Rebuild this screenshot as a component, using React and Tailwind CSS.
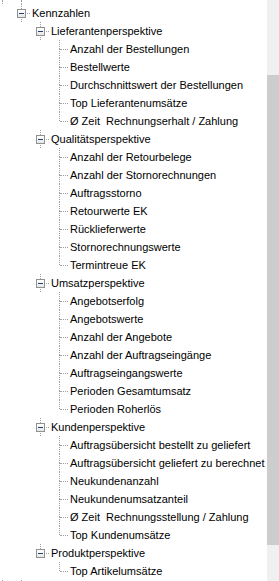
import React from "react";

const TREE = [
    {
        label: "Kennzahlen",
        children: [
            {
                label: "Lieferantenperspektive",
                children: [
                    "Anzahl der Bestellungen",
                    "Bestellwerte",
                    "Durchschnittswert der Bestellungen",
                    "Top Lieferantenumsätze",
                    "Ø Zeit  Rechnungserhalt / Zahlung",
                ],
            },
            {
                label: "Qualitätsperspektive",
                children: [
                    "Anzahl der Retourbelege",
                    "Anzahl der Stornorechnungen",
                    "Auftragsstorno",
                    "Retourwerte EK",
                    "Rücklieferwerte",
                    "Stornorechnungswerte",
                    "Termintreue EK",
                ],
            },
            {
                label: "Umsatzperspektive",
                children: [
                    "Angebotserfolg",
                    "Angebotswerte",
                    "Anzahl der Angebote",
                    "Anzahl der Auftragseingänge",
                    "Auftragseingangswerte",
                    "Perioden Gesamtumsatz",
                    "Perioden Roherlös",
                ],
            },
            {
                label: "Kundenperspektive",
                children: [
                    "Auftragsübersicht bestellt zu geliefert",
                    "Auftragsübersicht geliefert zu berechnet",
                    "Neukundenanzahl",
                    "Neukundenumsatzanteil",
                    "Ø Zeit  Rechnungsstellung / Zahlung",
                    "Top Kundenumsätze",
                ],
            },
            {
                label: "Produktperspektive",
                children: ["Top Artikelumsätze"],
            },
        ],
    },
];

// flatten the tree into rows; guides = which ancestor columns still carry a line
function flatten(nodes, guides, out) {
    nodes.forEach((n, i) => {
        const node = typeof n === "string" ? { label: n } : n;
        const last = i === nodes.length - 1;
        out.push({ label: node.label, guides, last, expandable: !!node.children });
        if (node.children) flatten(node.children, [...guides, !last], out);
    });
    return out;
}

// the root level has more siblings above and below the visible part
const ROWS = flatten(TREE, [true], []).map((r, i) => (i === 0 ? { ...r, last: false } : r));

function Guide({ on }) {
    return (
        <div className="relative w-[19px] shrink-0">
            {on && <span className="absolute left-[2px] top-0 bottom-0 border-l border-dotted border-[#a0a0a0]" />}
        </div>
    );
}

function Row({ row }) {
    return (
        <div className="flex h-[18px] items-center">
            {row.guides.map((g, i) => (
                <Guide key={i} on={g} />
            ))}
            <div className="relative h-full w-[12px] shrink-0">
                <span className="absolute left-[2px] top-0 h-[9px] border-l border-dotted border-[#a0a0a0]" />
                {!row.last && (
                    <span className="absolute left-[2px] top-[9px] bottom-0 border-l border-dotted border-[#a0a0a0]" />
                )}
                <span className="absolute left-[3px] top-[9px] w-[8px] border-t border-dotted border-[#a0a0a0]" />
                {row.expandable && (
                    <span className="absolute left-[-2px] top-[5px] flex h-[9px] w-[9px] items-center justify-center border border-[#919191] bg-gradient-to-b from-white to-[#e6e6e6]">
                        <span className="h-px w-[5px] bg-[#1f3f75]" />
                    </span>
                )}
            </div>
            <span className="whitespace-pre pl-[1px] text-[11px] leading-[18px] text-black">{row.label}</span>
        </div>
    );
}

export default function App() {
    return (
        <div className="flex h-[581px] w-[279px] overflow-hidden bg-white font-['Liberation_Sans',Arial,sans-serif]">
            <div className="min-w-0 flex-1 overflow-hidden">
                <div className="flex h-[4px]">
                    <Guide on />
                    <Guide on />
                </div>
                {ROWS.map((row, i) => (
                    <Row key={i} row={row} />
                ))}
                <div className="flex h-[4px]">
                    <Guide on />
                    <Guide on />
                </div>
            </div>
            <div className="w-[12px] shrink-0 bg-[#f0f0f0] pt-[75px]">
                <div className="h-[470px] bg-[#cdcdcd]" />
            </div>
        </div>
    );
}
